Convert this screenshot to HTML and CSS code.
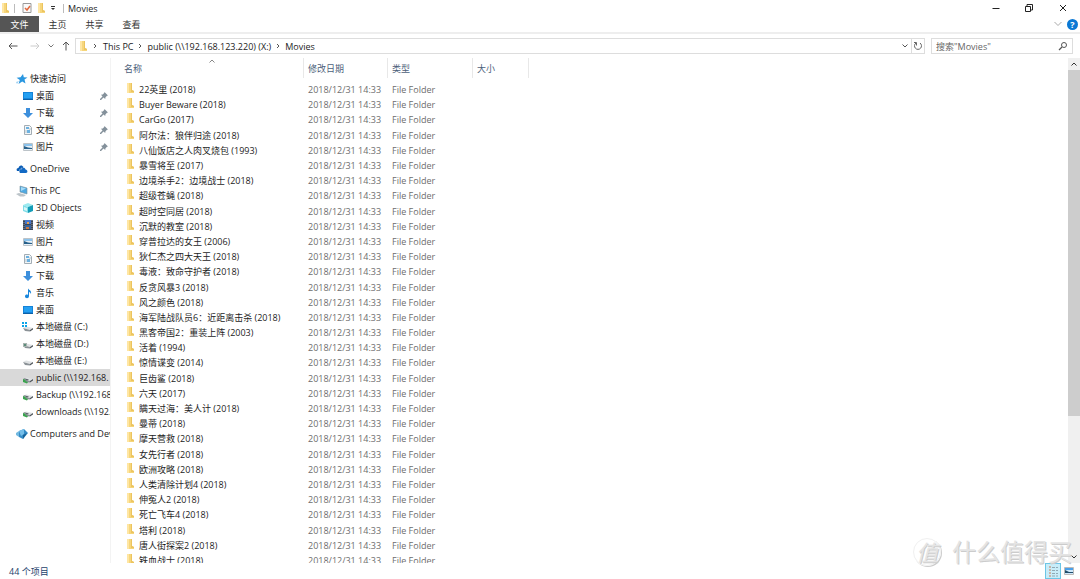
FILE: index.html
```html
<!DOCTYPE html>
<html lang="zh-CN">
<head>
<meta charset="utf-8">
<title>Movies</title>
<link rel="stylesheet" href="styles.css">
</head>
<body>
<svg class="sprite" aria-hidden="true">
  <symbol id="folder" viewBox="0 0 8 12"><path d="M1 1h5v7l2 1v2H1z" fill="#f6d67c"/><path d="M1 1h2v10H1z" fill="#ffe6a3"/><path d="M5 1h1v7l2 1v1H5z" fill="#ecc45f"/></symbol>
  <symbol id="star" viewBox="0 0 12 12"><path d="M7 1l.8 3.200 3.700.2-3 2.200 1 4-3.300-2-3.700 2.400 1.300-4L.6 4.800l3.900-.6z" fill="#2a97e0"/><path d="M0 9l3-1-2 3z" fill="#9ccff2"/></symbol>
  <symbol id="desktop" viewBox="0 0 12 12"><path d="M1 2h10v8H1z" fill="#1583d8"/><path d="M2 3h8v5H2z" fill="#25a0f2"/><path d="M1 9h10v1H1z" fill="#0c61a8"/></symbol>
  <symbol id="down" viewBox="0 0 12 12"><path d="M4 1h4v5h3l-5 5-5-5h3z" fill="#3d8fdc"/></symbol>
  <symbol id="doc" viewBox="0 0 12 12"><path d="M2.500 1.500h5l2 2v7h-7z" fill="#f3f6f8" stroke="#a3adb4"/><path d="M4 3h3v2H4zM5 6h3v3H5z" fill="#6cb1e0"/><path d="M4 6v3M7 5h2" stroke="#b4c4cc"/></symbol>
  <symbol id="picture" viewBox="0 0 12 12"><path d="M1.500 2.500h9v7h-9z" fill="#e8f1f8" stroke="#bcc3c8"/><path d="M2 3h8v2H2z" fill="#8cc3ec"/><path d="M2 8V5l4 1.500 4 .5v1z" fill="#27608a"/></symbol>
  <symbol id="cloud" viewBox="0 0 12 12"><path d="M1 8C0 6 1 5 2.500 5 3 2 6 1.500 7.500 4L4 8z" fill="#0a5cb5"/><path d="M3.500 8C3.500 6 6 5 6 5" fill="none" stroke="#fff" stroke-width=".6"/><path d="M4 10C2.500 8 4 6.500 5.500 6.500 6 4.500 9 4 9.500 6.500 12 7 12 10 10 10z" fill="#1269c4"/></symbol>
  <symbol id="pc" viewBox="0 0 12 12"><path d="M4 1l7 2v6L4 7z" fill="#4fa9e2" stroke="#78909c" stroke-width=".6"/><path d="M5 2l5 1.500L5 6z" fill="#a6dbf7"/><path d="M0 9l3-1 7 2-2 1.500H4z" fill="#bcc4c9"/></symbol>
  <symbol id="cube" viewBox="0 0 12 12"><path d="M1 3l5-2 5 2-5 2z" fill="#9ceaf0"/><path d="M1 3l5 2v6L1 9z" fill="#7fdce6"/><path d="M11 3L6 5v6l5-2z" fill="#149db8"/><path d="M2 5l3 1v3L2 8z" fill="#d8f7f8"/></symbol>
  <symbol id="film" viewBox="0 0 12 12"><path d="M1 1h10v10H1z" fill="#3c4654"/><path d="M3 1h6v4H3z" fill="#4677cc"/><path d="M3 6h6v4H3z" fill="#36649f"/><path d="M5 3h2v2H5z" fill="#e5a04c"/><path d="M4 8h3v2H4z" fill="#c9763c"/><path d="M2 1v10M10 1v10" stroke="#8d97a3" stroke-dasharray="1 1"/></symbol>
  <symbol id="note" viewBox="0 0 12 12"><path d="M6 1c0 2 4 2 3 6-1-2-2-2-2-2v4c0 3-4 2.500-4 .5S5 7 6 8z" fill="#1987dd"/></symbol>
  <symbol id="drive" viewBox="0 0 12 12"><path d="M1 7l3-1.500L11 7 8 9z" fill="#dfe2e4"/><path d="M1 7l7 2v1.500L3 10z" fill="#8b9297"/><path d="M8 9l3-2v1.500l-3 2z" fill="#50565b"/></symbol>
  <symbol id="windrive" viewBox="0 0 12 12"><use href="#drive"/><path d="M0 1h2v2H0zM3 1h2v2H3zM0 4h2v2H0zM3 4h2v2H3z" fill="#0ba4e8"/></symbol>
  <symbol id="datadrive" viewBox="0 0 12 12"><use href="#drive"/><path d="M1 5h4v4H1z" fill="#a9b5b0"/><path d="M2 6h2v2H2z" fill="#5d8c7b"/></symbol>
  <symbol id="netdrive" viewBox="0 0 12 12"><use href="#drive"/><path d="M1 7l3 1-1 1 3 1-1 1.500L1 10z" fill="#38a34c"/><path d="M1 6l6 1.500L5 8.500z" fill="#5d656a"/></symbol>
  <symbol id="network" viewBox="0 0 12 12"><path d="M0 5l3-2v6L0 7z" fill="#73b9e0"/><path d="M3 3l5-2 4 4-5 6-4-2z" fill="#348cc7"/><path d="M3 3l5-2v5L5 8z" fill="#74bee9"/><path d="M7 7l4-2-4 6z" fill="#176198"/></symbol>
  <symbol id="pin" viewBox="0 0 8 8"><path d="M4.500 0L8 3.500l-1 .3-1.500 1.500-.3 1.700L3.500 5.500 1 8H0V7l2.500-2.500L1 2.800l1.700-.3L4.200 1z" fill="#84919b"/></symbol>
  <symbol id="right" viewBox="0 0 6 6"><path d="M2 1l2 2-2 2" fill="none" stroke="#555"/></symbol>
  <symbol id="chevron" viewBox="0 0 8 8"><path d="M1.500 2.500L4 5l2.500-2.500" fill="none" stroke="currentColor"/></symbol>
</svg>

<div class="window">
  <header class="titlebar">
    <svg class="small-folder"><use href="#folder"/></svg>
    <span class="divider"></span>
    <button class="quick" aria-label="属性"><svg class="props" viewBox="0 0 10 12"><path d="M1 1.500h8v9H1z" fill="#fafafa" stroke="#9a9a9a"/><path d="M3 6l2 2 3-4" fill="none" stroke="#e2683e" stroke-width="1.500"/></svg></button>
    <button class="quick" aria-label="新建文件夹"><svg class="small-folder"><use href="#folder"/></svg></button>
    <button class="quick" aria-label="自定义"><svg class="menu-mark" viewBox="0 0 6 6"><path d="M1 1h4v1H1zM1 3h4L3 5z" fill="#333"/></svg></button>
    <span class="divider"></span>
    <h1>Movies</h1>
    <div class="controls">
      <button aria-label="最小化"><svg viewBox="0 0 10 10"><path d="M1.500 5.500h7" stroke="#222"/></svg></button>
      <button aria-label="还原"><svg viewBox="0 0 10 10"><path d="M1.500 3.500h5v5h-5zM3 3.500v-2h5.500V7H7" fill="none" stroke="#222"/></svg></button>
      <button aria-label="关闭"><svg viewBox="0 0 10 10"><path d="M2 2l6 6M8 2L2 8" stroke="#222"/></svg></button>
    </div>
  </header>

  <nav class="ribbon">
    <button class="file">文件</button><button>主页</button><button>共享</button><button>查看</button>
    <div class="ribbon-end">
      <svg class="expand" viewBox="0 0 10 10"><path d="M1.500 3L5 6.500 8.500 3" fill="none" stroke="#aaa"/></svg>
      <button class="help" aria-label="帮助">?</button>
    </div>
  </nav>

  <div class="address-row">
    <button class="go" aria-label="后退"><svg viewBox="0 0 10 10"><path d="M9.500 5H1M4 2L1 5l3 3" fill="none" stroke="#555"/></svg></button>
    <button class="go" aria-label="前进"><svg viewBox="0 0 10 10"><path d="M.5 5H9M6 2l3 3-3 3" fill="none" stroke="#ccc"/></svg></button>
    <button class="recent" aria-label="最近位置"><svg><use href="#chevron"/></svg></button>
    <button class="up" aria-label="向上"><svg viewBox="0 0 10 10"><path d="M5 9.500V1M2 4l3-3 3 3" fill="none" stroke="#555"/></svg></button>
    <div class="address">
      <svg class="small-folder"><use href="#folder"/></svg>
      <svg class="sep"><use href="#right"/></svg><a href="#">This PC</a>
      <svg class="sep"><use href="#right"/></svg><a href="#">public (\\192.168.123.220) (X:)</a>
      <svg class="sep"><use href="#right"/></svg><a href="#">Movies</a>
      <button class="history" aria-label="历史"><svg><use href="#chevron"/></svg></button>
      <button class="refresh" aria-label="刷新"><svg viewBox="0 0 10 10"><path d="M3 2a3.500 3.500 0 1 0 4 0M3.500 4.500v-3H1" fill="none" stroke="#666"/></svg></button>
    </div>
    <div class="search">
      <input type="text" aria-label="搜索" placeholder="搜索&quot;Movies&quot;">
      <svg viewBox="0 0 10 10"><circle cx="6" cy="4" r="2.500" fill="none" stroke="#555"/><path d="M4 6L1 9" stroke="#555" stroke-width="1.300"/></svg>
    </div>
  </div>

  <div class="content">
    <nav class="side">
      <ul>
        <li class="root"><svg><use href="#star"/></svg><a href="#">快速访问</a></li>
        <li><svg><use href="#desktop"/></svg><a href="#">桌面</a><svg class="pin"><use href="#pin"/></svg></li>
        <li><svg><use href="#down"/></svg><a href="#">下载</a><svg class="pin"><use href="#pin"/></svg></li>
        <li><svg><use href="#doc"/></svg><a href="#">文档</a><svg class="pin"><use href="#pin"/></svg></li>
        <li><svg><use href="#picture"/></svg><a href="#">图片</a><svg class="pin"><use href="#pin"/></svg></li>
      </ul>
      <ul><li class="root"><svg><use href="#cloud"/></svg><a href="#">OneDrive</a></li></ul>
      <ul>
        <li class="root"><svg><use href="#pc"/></svg><a href="#">This PC</a></li>
        <li><svg><use href="#cube"/></svg><a href="#">3D Objects</a></li>
        <li><svg><use href="#film"/></svg><a href="#">视频</a></li>
        <li><svg><use href="#picture"/></svg><a href="#">图片</a></li>
        <li><svg><use href="#doc"/></svg><a href="#">文档</a></li>
        <li><svg><use href="#down"/></svg><a href="#">下载</a></li>
        <li><svg><use href="#note"/></svg><a href="#">音乐</a></li>
        <li><svg><use href="#desktop"/></svg><a href="#">桌面</a></li>
        <li><svg><use href="#windrive"/></svg><a href="#">本地磁盘 (C:)</a></li>
        <li><svg><use href="#datadrive"/></svg><a href="#">本地磁盘 (D:)</a></li>
        <li><svg><use href="#drive"/></svg><a href="#">本地磁盘 (E:)</a></li>
        <li class="selected"><svg><use href="#netdrive"/></svg><a href="#">public (\\192.168.</a></li>
        <li><svg><use href="#netdrive"/></svg><a href="#">Backup (\\192.168</a></li>
        <li><svg><use href="#netdrive"/></svg><a href="#">downloads (\\192.</a></li>
      </ul>
      <ul><li class="root"><svg><use href="#network"/></svg><a href="#">Computers and Dev</a></li></ul>
    </nav>

    <main class="files">
      <table>
        <colgroup><col class="c-name"><col class="c-date"><col class="c-type"><col class="c-size"><col></colgroup>
        <thead><tr><th><div class="name-head">名称<svg class="sort" viewBox="0 0 8 4"><path d="M1.500 3.500L4 1l2.500 2.500" fill="none" stroke="#888"/></svg></div></th><th><div>修改日期</div></th><th><div>类型</div></th><th><div>大小</div></th><td></td></tr></thead>
        <tbody>
          <tr><td><svg><use href="#folder"/></svg>22英里 (2018)</td><td>2018/12/31 14:33</td><td>File Folder</td><td></td><td></td></tr>
          <tr><td><svg><use href="#folder"/></svg>Buyer Beware (2018)</td><td>2018/12/31 14:33</td><td>File Folder</td><td></td><td></td></tr>
          <tr><td><svg><use href="#folder"/></svg>CarGo (2017)</td><td>2018/12/31 14:33</td><td>File Folder</td><td></td><td></td></tr>
          <tr><td><svg><use href="#folder"/></svg>阿尔法：狼伴归途 (2018)</td><td>2018/12/31 14:33</td><td>File Folder</td><td></td><td></td></tr>
          <tr><td><svg><use href="#folder"/></svg>八仙饭店之人肉叉烧包 (1993)</td><td>2018/12/31 14:33</td><td>File Folder</td><td></td><td></td></tr>
          <tr><td><svg><use href="#folder"/></svg>暴雪将至 (2017)</td><td>2018/12/31 14:33</td><td>File Folder</td><td></td><td></td></tr>
          <tr><td><svg><use href="#folder"/></svg>边境杀手2：边境战士 (2018)</td><td>2018/12/31 14:33</td><td>File Folder</td><td></td><td></td></tr>
          <tr><td><svg><use href="#folder"/></svg>超级苍蝇 (2018)</td><td>2018/12/31 14:33</td><td>File Folder</td><td></td><td></td></tr>
          <tr><td><svg><use href="#folder"/></svg>超时空同居 (2018)</td><td>2018/12/31 14:33</td><td>File Folder</td><td></td><td></td></tr>
          <tr><td><svg><use href="#folder"/></svg>沉默的教室 (2018)</td><td>2018/12/31 14:33</td><td>File Folder</td><td></td><td></td></tr>
          <tr><td><svg><use href="#folder"/></svg>穿普拉达的女王 (2006)</td><td>2018/12/31 14:33</td><td>File Folder</td><td></td><td></td></tr>
          <tr><td><svg><use href="#folder"/></svg>狄仁杰之四大天王 (2018)</td><td>2018/12/31 14:33</td><td>File Folder</td><td></td><td></td></tr>
          <tr><td><svg><use href="#folder"/></svg>毒液：致命守护者 (2018)</td><td>2018/12/31 14:33</td><td>File Folder</td><td></td><td></td></tr>
          <tr><td><svg><use href="#folder"/></svg>反贪风暴3 (2018)</td><td>2018/12/31 14:33</td><td>File Folder</td><td></td><td></td></tr>
          <tr><td><svg><use href="#folder"/></svg>风之颜色 (2018)</td><td>2018/12/31 14:33</td><td>File Folder</td><td></td><td></td></tr>
          <tr><td><svg><use href="#folder"/></svg>海军陆战队员6：近距离击杀 (2018)</td><td>2018/12/31 14:33</td><td>File Folder</td><td></td><td></td></tr>
          <tr><td><svg><use href="#folder"/></svg>黑客帝国2：重装上阵 (2003)</td><td>2018/12/31 14:33</td><td>File Folder</td><td></td><td></td></tr>
          <tr><td><svg><use href="#folder"/></svg>活着 (1994)</td><td>2018/12/31 14:33</td><td>File Folder</td><td></td><td></td></tr>
          <tr><td><svg><use href="#folder"/></svg>惊情谍变 (2014)</td><td>2018/12/31 14:33</td><td>File Folder</td><td></td><td></td></tr>
          <tr><td><svg><use href="#folder"/></svg>巨齿鲨 (2018)</td><td>2018/12/31 14:33</td><td>File Folder</td><td></td><td></td></tr>
          <tr><td><svg><use href="#folder"/></svg>六天 (2017)</td><td>2018/12/31 14:33</td><td>File Folder</td><td></td><td></td></tr>
          <tr><td><svg><use href="#folder"/></svg>瞒天过海：美人计 (2018)</td><td>2018/12/31 14:33</td><td>File Folder</td><td></td><td></td></tr>
          <tr><td><svg><use href="#folder"/></svg>曼蒂 (2018)</td><td>2018/12/31 14:33</td><td>File Folder</td><td></td><td></td></tr>
          <tr><td><svg><use href="#folder"/></svg>摩天营救 (2018)</td><td>2018/12/31 14:33</td><td>File Folder</td><td></td><td></td></tr>
          <tr><td><svg><use href="#folder"/></svg>女先行者 (2018)</td><td>2018/12/31 14:33</td><td>File Folder</td><td></td><td></td></tr>
          <tr><td><svg><use href="#folder"/></svg>欧洲攻略 (2018)</td><td>2018/12/31 14:33</td><td>File Folder</td><td></td><td></td></tr>
          <tr><td><svg><use href="#folder"/></svg>人类清除计划4 (2018)</td><td>2018/12/31 14:33</td><td>File Folder</td><td></td><td></td></tr>
          <tr><td><svg><use href="#folder"/></svg>伸冤人2 (2018)</td><td>2018/12/31 14:33</td><td>File Folder</td><td></td><td></td></tr>
          <tr><td><svg><use href="#folder"/></svg>死亡飞车4 (2018)</td><td>2018/12/31 14:33</td><td>File Folder</td><td></td><td></td></tr>
          <tr><td><svg><use href="#folder"/></svg>塔利 (2018)</td><td>2018/12/31 14:33</td><td>File Folder</td><td></td><td></td></tr>
          <tr><td><svg><use href="#folder"/></svg>唐人街探案2 (2018)</td><td>2018/12/31 14:33</td><td>File Folder</td><td></td><td></td></tr>
          <tr><td><svg><use href="#folder"/></svg>铁血战士 (2018)</td><td>2018/12/31 14:33</td><td>File Folder</td><td></td><td></td></tr>
        </tbody>
      </table>
    </main>
    <div class="scrollbar">
      <button aria-label="向上滚动"><svg class="flip"><use href="#chevron"/></svg></button>
      <div class="track"><div class="thumb"></div></div>
      <button aria-label="向下滚动"><svg><use href="#chevron"/></svg></button>
    </div>
  </div>

  <footer class="status">
    <span>44 个项目</span>
    <button class="view active" aria-label="详细信息"><svg viewBox="0 0 12 12"><path d="M2 2h2M2 5h2M2 8h2M2 11h2" stroke="#c9a08c" stroke-width="1.500"/><path d="M5 2.500h3M9 2.500h2M5 5.500h3M9 5.500h2M5 8.500h3M9 8.500h2M5 11h3M9 11h2" stroke="#8fa9b5"/></svg></button>
    <button class="view" aria-label="大图标"><svg viewBox="0 0 12 12"><path d="M1.500 2.500h9v7h-9z" fill="#cde8fb" stroke="#bbb"/><path d="M2 3h8v2H2z" fill="#4aa0ea"/><path d="M2 5l4 2h4v1H2z" fill="#204d6b"/></svg></button>
  </footer>
</div>
<div class="watermark"><span class="seal">值</span><span>什么值得买</span></div>
</body>
</html>
```
FILE: styles.css
```css
* { box-sizing: border-box; }
body { margin: 0; background: #fff; color: #1c1c1c; font: 9px/15px "Open Sans", "Noto Sans CJK SC", sans-serif; overflow: hidden; }
button, input { font: inherit; color: inherit; border: 0; padding: 0; margin: 0; background: none; }
button { display: flex; align-items: center; justify-content: center; }
a { color: inherit; text-decoration: none; white-space: nowrap; }
svg { display: block; flex: none; width: 10px; height: 10px; }
.sprite { position: absolute; width: 0; height: 0; }
.window { display: flex; flex-direction: column; height: 100vh; }

.titlebar { display: flex; align-items: center; height: 16px; padding-left: 1px; }
.titlebar h1 { margin: 0 0 0 4px; font-size: 9px; font-weight: 400; }
.small-folder { width: 8px; height: 12px; }
.divider { width: 1px; height: 9px; background: #bbb; }
.small-folder + .divider { margin: 0 4px 0 5px; }
.quick { width: 12px; height: 14px; }
.quick:nth-of-type(1) { width: 16px; }
.quick:nth-of-type(3) { margin-right: 4px; }
.props { height: 12px; }
.menu-mark { width: 6px; height: 6px; }
.controls { display: flex; margin-left: auto; }
.controls button { width: 33px; height: 16px; }
.controls button:last-child { width: 35px; }

.ribbon { display: flex; height: 18px; border-bottom: 2px solid #eee; color: #333; }
.ribbon button { width: 37px; height: 16px; }
.ribbon .file { width: 39px; background: #555; color: #fff; }
.ribbon-end { display: flex; align-items: center; gap: 4px; margin-left: auto; padding-right: 2px; }
.ribbon .help { width: 11px; height: 11px; border-radius: 50%; background: #0a78d4; color: #fff; font-weight: 700; line-height: 11px; }

.address-row { display: flex; align-items: center; height: 24px; padding: 0 7px 0 8px; }
.go { width: 10px; margin-right: 12px; }
.recent { width: 8px; margin-right: 6px; color: #777; }
.recent svg, .history svg { width: 8px; height: 8px; }
.up { width: 10px; margin-right: 4px; }
.address { display: flex; align-items: center; flex: 1; height: 16px; padding-left: 3px; border: 1px solid #ddd; }
.go + .go { margin-right: 7px; }
.sep { width: 6px; height: 6px; margin: 0 4px; }
.small-folder + .sep { margin: 0 5px; }
.history { margin-left: auto; width: 13px; height: 14px; color: #555; }
.refresh { width: 13px; height: 14px; border-left: 1px solid #ddd; }
.search { display: flex; align-items: center; width: 142px; height: 16px; margin-left: 6px; padding: 0 4px; border: 1px solid #ddd; }
.search input { flex: 1; min-width: 0; height: 14px; outline: none; }
.search input::placeholder { color: #666; }

.content { display: flex; flex: 1; min-height: 0; }
.side { width: 111px; flex: none; overflow: hidden; padding-top: 12px; border-right: 1px solid #f3f3f3; }
.side ul { list-style: none; margin: 0 0 5px; padding: 0; }
.side li { display: flex; align-items: center; gap: 2px; height: 17px; padding-left: 22px; }
.side li svg { width: 12px; height: 12px; }
.side .root { padding-left: 16px; }
.side .selected { background: #d9d9d9; }
.side li .pin { width: 8px; height: 8px; margin: 0 2px 0 auto; }

.files { flex: 1; min-width: 0; overflow: hidden; }
table { width: 100%; height: 101%; border-collapse: collapse; table-layout: fixed; }
.c-name { width: 193px; }
.c-date { width: 84px; }
.c-type { width: 85px; }
.c-size { width: 56px; }
td, th { padding: 0; text-align: left; font-weight: 400; white-space: nowrap; }
thead tr { height: 24px; }
th { vertical-align: top; color: #4c607a; }
th div { height: 20px; padding-left: 4px; line-height: 21px; border-right: 1px solid #e8e8e8; }
th .name-head { display: flex; align-items: flex-start; padding-left: 13px; }
.sort { width: 8px; height: 4px; margin: 1px 0 0 66px; }
tbody td { padding-left: 4px; color: #6d6d6d; line-height: 15px; }
tbody td:first-child { padding-left: 15px; color: #1c1c1c; }
tbody svg { display: inline-block; width: 8px; height: 12px; margin-right: 5px; vertical-align: top; }

.scrollbar { display: flex; flex-direction: column; flex: none; width: 12px; background: #f0f0f0; color: #333; }
.scrollbar button { height: 12px; }
.scrollbar svg { width: 8px; height: 8px; }
.flip { transform: rotate(180deg); }
.track { flex: 1; }
.thumb { height: 72%; background: #cdcdcd; }

.status { display: flex; align-items: center; height: 16px; padding: 0 3px 0 9px; color: #25426b; }
.status span { margin-right: auto; }
.view { width: 16px; height: 16px; }
.view svg { width: 12px; height: 12px; }
.view.active { background: #c8ecf8; border: 1px solid #6cc6e6; }

.watermark { position: absolute; right: 8px; bottom: 12px; display: flex; align-items: center; gap: 11px; color: #e4e4e4; font-size: 24px; line-height: 30px; text-shadow: 1px 1px 0 #ccc; pointer-events: none; }
.seal { width: 28px; height: 28px; border-radius: 50%; border: 1px solid #f0f0f0; box-shadow: 1px 1px 0 #ccc; font-size: 22px; font-style: italic; line-height: 26px; text-align: center; }
```
